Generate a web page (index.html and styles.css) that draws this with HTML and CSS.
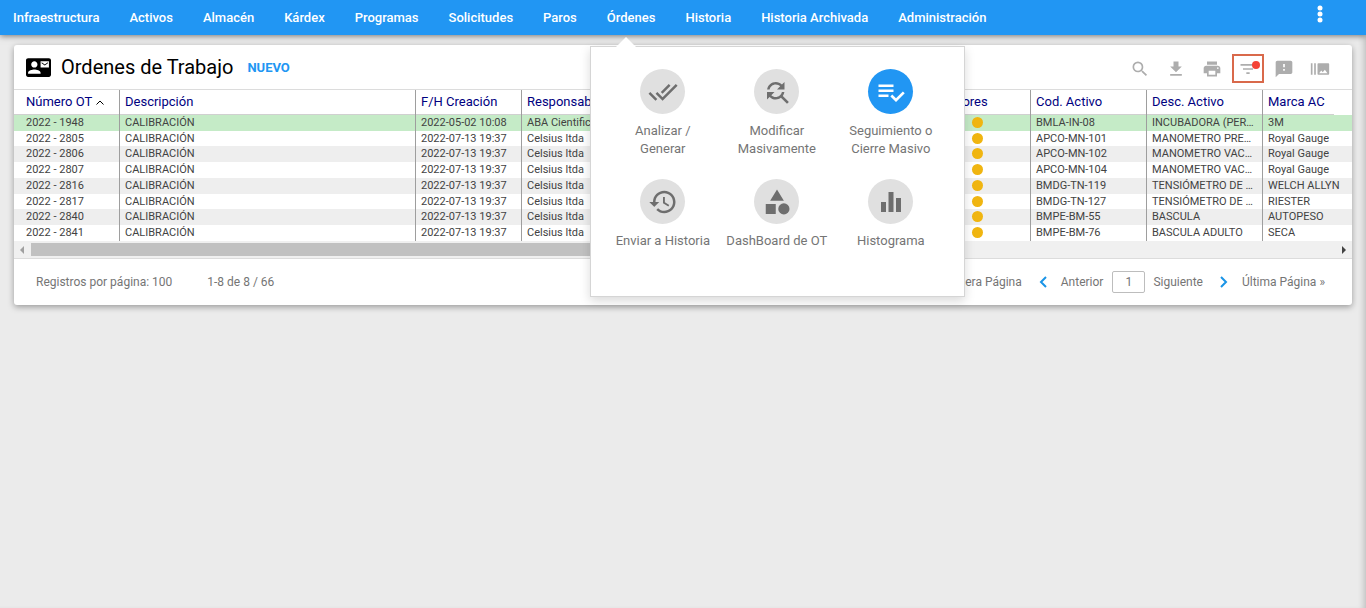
FILE: index.html
```html
<!DOCTYPE html>
<html lang="es">
<head>
<meta charset="utf-8">
<title>Ordenes de Trabajo</title>
<link rel="stylesheet" href="styles.css">
</head>
<body>
<header class="topbar">
  <nav class="nav">
    <a href="#">Infraestructura</a>
    <a href="#">Activos</a>
    <a href="#">Almacén</a>
    <a href="#">Kárdex</a>
    <a href="#">Programas</a>
    <a href="#">Solicitudes</a>
    <a href="#">Paros</a>
    <div class="nav-item">
      <a href="#">Órdenes</a>
      <div class="menu">
        <a class="tile" href="#"><span class="disc"><svg class="wide" viewBox="0 0 24 24"><path d="M18 7l-1.41-1.41-6.34 6.34 1.41 1.41L18 7zm4.24-1.41L11.66 16.17 7.48 12l-1.41 1.41L11.66 19l12-12-1.42-1.41zM.41 13.41L6 19l1.41-1.41L1.83 12 .41 13.41z"/></svg></span>Analizar /<br>Generar</a>
        <a class="tile" href="#"><span class="disc"><svg class="wide" viewBox="0 0 24 24"><path d="M11 6c1.38 0 2.63.56 3.54 1.46L12 10h6V4l-2.05 2.05C14.68 4.78 12.93 4 11 4c-3.53 0-6.43 2.61-6.92 6H6.1c.46-2.28 2.48-4 4.9-4zm5.64 9.14c.66-.9 1.12-1.97 1.28-3.14H15.9c-.46 2.28-2.48 4-4.9 4-1.38 0-2.63-.56-3.54-1.46L10 12H4v6l2.05-2.05C7.32 17.22 9.07 18 11 18c1.55 0 2.98-.51 4.14-1.36L20 21.49 21.49 20l-4.85-4.86z"/></svg></span>Modificar<br>Masivamente</a>
        <a class="tile" href="#"><span class="disc active"><svg class="wide" viewBox="0 0 24 24"><path d="M14 10H2v2h12v-2zm0-4H2v2h12V6zM2 16h8v-2H2v2zm19.500-4.500L23 13l-6.990 7-4.510-4.500L13 14l3.010 3 5.490-5.500z"/></svg></span>Seguimiento o<br>Cierre Masivo</a>
        <a class="tile" href="#"><span class="disc"><svg class="wide" viewBox="0 0 24 24"><path d="M13 3c-4.970 0-9 4.030-9 9H1l3.890 3.890.07.14L9 12H6c0-3.870 3.130-7 7-7s7 3.130 7 7-3.130 7-7 7c-1.930 0-3.680-.79-4.940-2.060l-1.420 1.420C8.270 19.990 10.510 21 13 21c4.970 0 9-4.030 9-9s-4.030-9-9-9zm-1 5v5l4.280 2.540.72-1.210-3.500-2.080V8H12z"/></svg></span>Enviar a Historia</a>
        <a class="tile" href="#"><span class="disc"><svg class="wide" viewBox="0 0 24 24"><path d="M12 2L6.500 11h11zM3 13.500h8v8H3z"/><circle cx="17.500" cy="17.500" r="4.500"/></svg></span>DashBoard de OT</a>
        <a class="tile" href="#"><span class="disc"><svg viewBox="0 0 24 24"><path d="M2 12h5v10H2zM9.500 2h5v20h-5zM17 8h5v14h-5z"/></svg></span>Histograma</a>
      </div>
    </div>
    <a href="#">Historia</a>
    <a href="#">Historia Archivada</a>
    <a href="#">Administración</a>
  </nav>
  <button class="more" aria-label="Más opciones"><svg viewBox="0 0 6 18"><circle cx="3" cy="3" r="2.500"/><circle cx="3" cy="9" r="2.500"/><circle cx="3" cy="15" r="2.500"/></svg></button>
</header>

<main class="card">
  <div class="title-row">
    <svg class="title-icon" viewBox="0 3 24 18"><path d="M21 8V7l-3 2-3-2v1l3 2 3-2zm1-5H2C.9 3 0 3.900 0 5v14c0 1.100.9 2 2 2h20c1.100 0 1.990-.9 1.990-2L24 5c0-1.100-.9-2-2-2zM8 6c1.660 0 3 1.340 3 3s-1.340 3-3 3-3-1.340-3-3 1.340-3 3-3zm6 12H2v-1c0-2 4-3.100 6-3.100s6 1.100 6 3.100v1zm8-6h-8V6h8v6z"/></svg>
    <h1>Ordenes de Trabajo</h1>
    <button class="new">NUEVO</button>
    <div class="tools">
      <button class="tool" aria-label="Buscar"><svg viewBox="0 0 24 24"><path d="M15.500 14h-.79l-.28-.27A6.470 6.470 0 0 0 16 9.500 6.500 6.500 0 1 0 9.500 16c1.610 0 3.090-.59 4.230-1.570l.27.28v.79l5 4.990L20.490 19l-4.990-5zm-6 0C7.010 14 5 11.990 5 9.500S7.010 5 9.500 5 14 7.010 14 9.500 11.990 14 9.500 14z"/></svg></button>
      <button class="tool" aria-label="Descargar"><svg viewBox="0 0 24 24"><path d="M19 9h-4V3H9v6H5l7 7 7-7zM5 18v2h14v-2H5z"/></svg></button>
      <button class="tool" aria-label="Imprimir"><svg viewBox="0 0 24 24"><path d="M19 8H5c-1.660 0-3 1.340-3 3v6h4v4h12v-4h4v-6c0-1.660-1.340-3-3-3zm-3 11H8v-5h8v5zm3-7c-.55 0-1-.45-1-1s.45-1 1-1 1 .45 1 1-.45 1-1 1zm-1-9H6v4h12V3z"/></svg></button>
      <button class="tool marked" aria-label="Filtrar"><svg viewBox="0 0 24 24"><path d="M10 18h4v-2h-4v2zM3 6v2h18V6H3zm3 7h12v-2H6v2z"/></svg><span class="alert"></span></button>
      <button class="tool" aria-label="Comentarios"><svg viewBox="0 0 24 24"><path d="M20 2H4c-1.100 0-1.990.9-1.990 2L2 22l4-4h14c1.100 0 2-.9 2-2V4c0-1.100-.9-2-2-2zm-7 12h-2v-2h2v2zm0-4h-2V6h2v4z"/></svg></button>
      <button class="tool" aria-label="Imágenes"><svg viewBox="0 0 24 24"><path d="M1 5h2v14H1zm4 0h2v14H5zm17 0H10c-.55 0-1 .45-1 1v12c0 .55.45 1 1 1h12c.55 0 1-.45 1-1V6c0-.55-.45-1-1-1zM11 17l2.500-3.150L15.290 16l2.500-3.220L21 17H11z"/></svg></button>
    </div>
  </div>

  <table class="grid">
    <colgroup><col class="c-num"><col class="c-desc"><col class="c-date"><col class="c-resp"><col class="c-ind"><col class="c-act"><col class="c-act"><col></colgroup>
    <thead>
      <tr>
        <th><div>Número OT <svg class="sort" viewBox="0 0 8 5"><path d="M.5 4.500L4 1l3.500 3.500"/></svg></div></th>
        <th><div>Descripción</div></th><th><div>F/H Creación</div></th><th><div>Responsable</div></th><th><div>Indicadores</div></th><th><div>Cod. Activo</div></th><th><div>Desc. Activo</div></th><th><div>Marca AC</div></th>
      </tr>
    </thead>
    <tbody>
      <tr class="selected"><td>2022 - 1948</td><td>CALIBRACIÓN</td><td>2022-05-02 10:08</td><td>ABA Cientifica</td><td><i class="dot"></i></td><td>BMLA-IN-08</td><td>INCUBADORA (PER…</td><td>3M</td></tr>
      <tr><td>2022 - 2805</td><td>CALIBRACIÓN</td><td>2022-07-13 19:37</td><td>Celsius ltda</td><td><i class="dot"></i></td><td>APCO-MN-101</td><td>MANOMETRO PRE…</td><td>Royal Gauge</td></tr>
      <tr><td>2022 - 2806</td><td>CALIBRACIÓN</td><td>2022-07-13 19:37</td><td>Celsius ltda</td><td><i class="dot"></i></td><td>APCO-MN-102</td><td>MANOMETRO VAC…</td><td>Royal Gauge</td></tr>
      <tr><td>2022 - 2807</td><td>CALIBRACIÓN</td><td>2022-07-13 19:37</td><td>Celsius ltda</td><td><i class="dot"></i></td><td>APCO-MN-104</td><td>MANOMETRO VAC…</td><td>Royal Gauge</td></tr>
      <tr><td>2022 - 2816</td><td>CALIBRACIÓN</td><td>2022-07-13 19:37</td><td>Celsius ltda</td><td><i class="dot"></i></td><td>BMDG-TN-119</td><td>TENSIÓMETRO DE …</td><td>WELCH ALLYN</td></tr>
      <tr><td>2022 - 2817</td><td>CALIBRACIÓN</td><td>2022-07-13 19:37</td><td>Celsius ltda</td><td><i class="dot"></i></td><td>BMDG-TN-127</td><td>TENSIÓMETRO DE …</td><td>RIESTER</td></tr>
      <tr><td>2022 - 2840</td><td>CALIBRACIÓN</td><td>2022-07-13 19:37</td><td>Celsius ltda</td><td><i class="dot"></i></td><td>BMPE-BM-55</td><td>BASCULA</td><td>AUTOPESO</td></tr>
      <tr><td>2022 - 2841</td><td>CALIBRACIÓN</td><td>2022-07-13 19:37</td><td>Celsius ltda</td><td><i class="dot"></i></td><td>BMPE-BM-76</td><td>BASCULA ADULTO</td><td>SECA</td></tr>
    </tbody>
  </table>

  <div class="scrollbar">
    <svg class="arrow left" viewBox="0 0 4 8"><path d="M4 0v8L0 4z"/></svg>
    <div class="track"><div class="thumb"></div></div>
    <svg class="arrow" viewBox="0 0 4 8"><path d="M0 0v8l4-4z"/></svg>
  </div>

  <footer class="pager">
    <span>Registros por página: 100</span>
    <span class="count">1-8 de 8 / 66</span>
    <div class="pages">
      <a class="first" href="#">« Primera Página</a>
      <a class="prev" href="#"><svg class="chev" viewBox="0 0 8 12"><path d="M7 1L2 6l5 5"/></svg>Anterior</a>
      <input class="page" type="text" value="1" aria-label="Página">
      <a class="next" href="#">Siguiente<svg class="chev" viewBox="0 0 8 12"><path d="M1 1l5 5-5 5"/></svg></a>
      <a href="#">Última Página »</a>
    </div>
  </footer>
</main>
</body>
</html>
```
FILE: styles.css
```css
* { box-sizing: border-box; }
body { margin: 0; min-height: 100vh; background: #ebebeb; box-shadow: inset -6px 0 6px -4px rgba(0, 0, 0, .2); font-family: Roboto, sans-serif; font-size: 12px; color: #757575; }
a { color: inherit; text-decoration: none; }
button { padding: 0; border: 0; background: none; font: inherit; cursor: pointer; }
svg { display: block; fill: currentColor; }

.topbar { position: relative; z-index: 2; display: flex; align-items: center; justify-content: space-between; height: 35px; padding-right: 40px; background: #2196f3; color: #fff; box-shadow: 0 1px 6px rgba(0, 0, 0, .5); }
.nav { display: flex; padding-left: 13px; gap: 30px; font-size: 13px; font-weight: 500; line-height: 35px; white-space: nowrap; }
.nav-item { position: relative; }
.more { display: flex; justify-content: center; width: 12px; padding-bottom: 8px; }
.more svg { width: 6px; height: 18px; color: #fff; }

.menu { position: absolute; top: 46px; left: -17px; width: 375px; height: 251px; padding: 22px 15px 0; display: grid; grid-template-columns: repeat(3, 114px); grid-template-rows: 110px 110px; background: #fff; border: 1px solid #d5d5d5; box-shadow: 0 4px 10px rgba(0, 0, 0, .15); color: #757575; font-size: 13px; font-weight: 400; line-height: 18px; text-align: center; }
.menu::before { content: ""; position: absolute; top: -10px; left: 25px; border: 10px solid transparent; border-top: 0; border-bottom-color: #fff; }
.tile { display: block; }
.disc { display: flex; align-items: center; justify-content: center; width: 45px; height: 45px; margin: 0 auto 8px; border-radius: 50%; background: #e0e0e0; color: #6e6e6e; }
.disc svg { width: 24px; height: 24px; }
.disc .wide { width: 30px; height: 30px; }
.disc.active { background: #2196f3; color: #fff; }

.card { margin: 10px 14px 0; background: #fff; border-radius: 3px; overflow: hidden; box-shadow: 0 2px 6px rgba(0, 0, 0, .35); }
.title-row { display: flex; align-items: center; height: 45px; padding: 0 16px 0 12px; border-bottom: 1px solid #dcdcdc; }
.title-icon { width: 25px; height: 19px; color: #000; }
h1 { margin: 0 14px 0 10px; font-size: 20px; font-weight: 400; color: #000; }
.new { color: #2196f3; font-size: 13px; font-weight: 700; }
.tools { display: flex; margin-left: auto; gap: 4px; padding-top: 2px; }
.tool { position: relative; display: flex; align-items: center; justify-content: center; width: 32px; height: 29px; padding-top: 2px; color: #adadad; }
.tool svg { width: 20px; height: 20px; }
.marked { border: 2px solid #d9694b; }
.alert { position: absolute; top: 5px; right: 2px; width: 8px; height: 8px; border-radius: 50%; background: #f44336; }

.grid { width: 100%; table-layout: fixed; border-collapse: separate; border-spacing: 0; }
.c-num, .c-date { width: 106px; }
.c-desc { width: 296px; }
.c-resp { width: 393px; }
.c-ind, .c-act { width: 116px; }
th, td { padding: 0; text-align: left; white-space: nowrap; overflow: hidden; text-overflow: ellipsis; border-right: 1px solid #9e9e9e; }
th:last-child, td:last-child { border-right: 0; }
th { color: #000080; font-size: 13px; font-weight: 400; }
th div { height: 25px; padding-left: 5px; line-height: 24px; border-bottom: 1px solid #d0d0d0; }
th:first-child div { padding-left: 12px; }
th:last-child div { margin-right: 18px; }
.sort { display: inline-block; width: 8px; height: 5px; margin-left: 1px; overflow: visible; fill: none; stroke: #000; vertical-align: 1px; }
td { height: 16px; padding: 0 5px; font-size: 11px; line-height: 15px; color: #424242; vertical-align: top; }
td:first-child { padding-left: 12px; }
tr:nth-child(4n+2) td { height: 15px; }
tr:nth-child(odd) td { background: #eee; }
tr.selected td { background: #c5ebc7; }
.dot { display: block; width: 11px; height: 11px; margin: 2px 0 0 52px; border-radius: 50%; background: #f0b510; }

.scrollbar { display: flex; align-items: center; height: 18px; padding: 0 6px; background: #f0f0f0; border-bottom: 1px solid #dcdcdc; }
.arrow { width: 4px; height: 8px; color: #424242; }
.arrow.left { color: #a0a0a0; }
.track { flex: 1; margin: 0 7px; }
.thumb { width: 60%; height: 13px; background: #c1c1c1; }

.pager { display: flex; align-items: center; height: 46px; padding: 0 27px 0 22px; }
.count { margin-left: 35px; }
.pages { display: flex; align-items: center; margin-left: auto; }
.pages a { display: flex; align-items: center; }
.first { margin-right: 17px; }
.prev { gap: 14px; }
.next { gap: 17px; margin-right: 14px; }
.chev { width: 8px; height: 12px; fill: none; stroke: #1a94e6; stroke-width: 2; }
.page { width: 33px; height: 22px; margin: 0 8px 0 9px; padding: 0; border: 1px solid #bdbdbd; border-radius: 2px; color: inherit; font: inherit; text-align: center; }
```
